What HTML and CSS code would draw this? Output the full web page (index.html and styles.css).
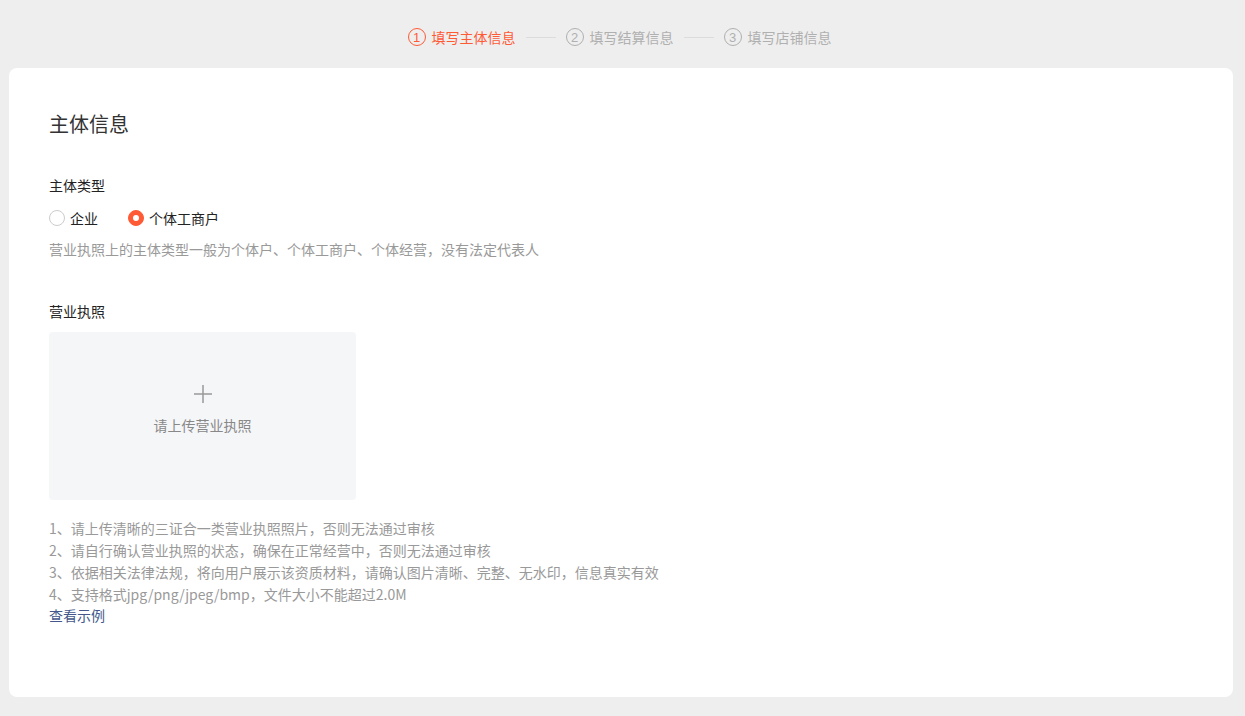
FILE: index.html
```html
<!DOCTYPE html>
<html lang="zh-CN">
<head>
  <meta charset="UTF-8" />
  <title>填写主体信息</title>
  <link rel="stylesheet" href="styles.css">
</head>
<body>

<!-- Steps -->
<div class="steps">
  <div class="step active"><span class="step-num">1</span>填写主体信息</div>
  <div class="step-line"></div>
  <div class="step"><span class="step-num">2</span>填写结算信息</div>
  <div class="step-line"></div>
  <div class="step"><span class="step-num">3</span>填写店铺信息</div>
</div>

<div class="card">
  <h2 class="card-title">主体信息</h2>

  <!-- Subject type -->
  <div class="field">
    <div class="field-label">主体类型</div>
    <div class="radio-group">
      <label class="radio"><span class="radio-dot"></span>企业</label>
      <label class="radio checked"><span class="radio-dot"></span>个体工商户</label>
    </div>
    <div class="help">营业执照上的主体类型一般为个体户、个体工商户、个体经营，没有法定代表人</div>
  </div>

  <!-- License upload -->
  <div class="field license">
    <div class="field-label">营业执照</div>
    <div class="upload">
      <svg class="upload-plus" width="20" height="20" viewBox="0 0 20 20">
        <path d="M10 1v18M1 10h18" stroke="#999" stroke-width="1.5" fill="none"/>
      </svg>
      <div class="upload-text">请上传营业执照</div>
    </div>
    <ul class="tips">
      <li>1、请上传清晰的三证合一类营业执照照片，否则无法通过审核</li>
      <li>2、请自行确认营业执照的状态，确保在正常经营中，否则无法通过审核</li>
      <li>3、依据相关法律法规，将向用户展示该资质材料，请确认图片清晰、完整、无水印，信息真实有效</li>
      <li>4、支持格式jpg/png/jpeg/bmp，文件大小不能超过2.0M</li>
    </ul>
    <a class="example-link" href="#">查看示例</a>
  </div>
</div>

</body>
</html>
```

FILE: styles.css
```css
body {
  margin: 0;
  padding: 0;
  background: #eeeeee;
  color: #333;
  font-family: "Noto Sans CJK SC", "Noto Sans", sans-serif;
  font-size: 14px;
}
.steps {
  display: flex;
  justify-content: center;
  align-items: center;
  padding-top: 26px;
  height: 22px;
  margin-bottom: 20px;
  padding-right: 6px;
}
.step {
  display: flex;
  align-items: center;
  color: #b0b0b0;
  font-size: 14px;
  line-height: 22px;
}
.step.active {
  color: #ff5a36;
}
.step-num {
  width: 16px;
  height: 16px;
  border: 1px solid currentColor;
  border-radius: 50%;
  display: flex;
  align-items: center;
  justify-content: center;
  font-size: 13px;
  line-height: 1;
  margin-right: 6px;
  font-family: "Liberation Sans", sans-serif;
}
.step-line {
  width: 30px;
  height: 1px;
  background: #dcdcdc;
  margin: 0 10px;
}
.card {
  background: #fff;
  border-radius: 8px;
  margin: 0 12px 0 9px;
  height: 629px;
  box-sizing: border-box;
  padding: 42px 40px 0;
}
.card-title {
  margin: 0 0 36px;
  font-size: 20px;
  font-weight: normal;
  line-height: 28px;
  color: #333;
}
.field-label {
  line-height: 22px;
  color: #222;
}
.radio-group {
  display: flex;
  margin-top: 11px;
  line-height: 22px;
}
.radio {
  display: flex;
  align-items: center;
  margin-right: 30px;
  color: #222;
}
.radio-dot {
  width: 14px;
  height: 14px;
  border: 1px solid #ccc;
  border-radius: 50%;
  margin-right: 5px;
  box-sizing: content-box;
}
.radio.checked .radio-dot {
  background: #ff5a36;
  border-color: #ff5a36;
  position: relative;
}
.radio.checked .radio-dot::after {
  content: "";
  position: absolute;
  left: 4px;
  top: 4px;
  width: 6px;
  height: 6px;
  border-radius: 50%;
  background: #fff;
}
.help {
  margin-top: 9px;
  line-height: 22px;
  color: #999;
}
.license {
  margin-top: 40px;
}
.upload {
  margin-top: 10px;
  width: 307px;
  height: 168px;
  background: #f5f6f8;
  border-radius: 4px;
  box-sizing: border-box;
  padding-top: 52px;
  display: flex;
  flex-direction: column;
  align-items: center;
}
.upload-plus {
  display: block;
}
.upload-text {
  margin-top: 10px;
  line-height: 22px;
  color: #888;
}
.tips {
  list-style: none;
  margin: 17px 0 0;
  padding: 0;
}
.tips li {
  line-height: 22px;
  color: #999;
}
.example-link {
  display: block;
  line-height: 20px;
  color: #43578c;
  text-decoration: none;
}
```
